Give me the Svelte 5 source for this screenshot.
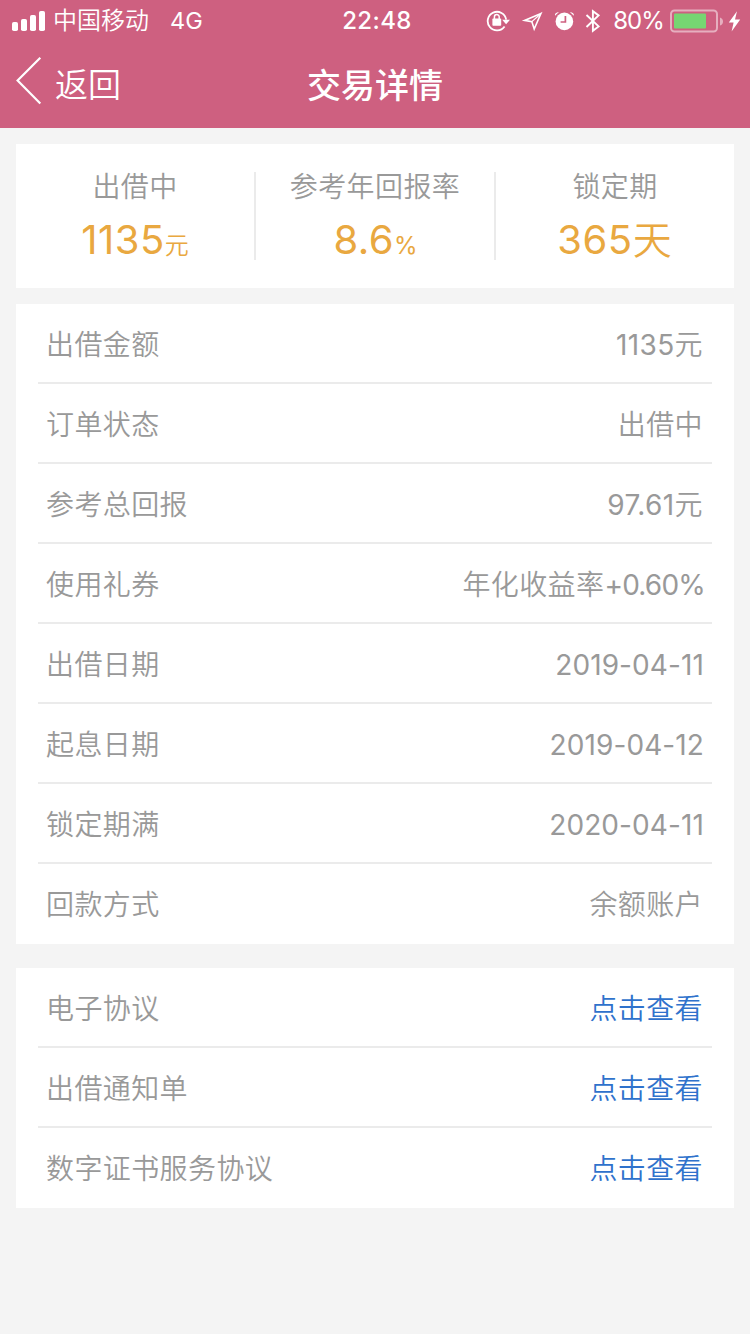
<script>
  const summary = [
    { label: '出借中', value: '1135', unit: '元', kind: 'small' },
    { label: '参考年回报率', value: '8.6', unit: '%', kind: 'small percentage' },
    { label: '锁定期', value: '365', unit: '天', kind: 'days' }
  ];
  const details = [
    { label: '出借金额', num: '1135', suffix: '元' },
    { label: '订单状态', suffix: '出借中' },
    { label: '参考总回报', num: '97.61', suffix: '元' },
    { label: '使用礼券', prefix: '年化收益率', num: '+0.60%' },
    { label: '出借日期', num: '2019-04-11' },
    { label: '起息日期', num: '2019-04-12' },
    { label: '锁定期满', num: '2020-04-11' },
    { label: '回款方式', suffix: '余额账户' }
  ];
  const documents = ['电子协议', '出借通知单', '数字证书服务协议'];
</script>

<div class="screen">
  <header>
    <div class="status">
      <div class="left">
        <svg width="34" height="20" viewBox="0 0 34 20" fill="#fff">
          <rect x="0" y="11" width="6" height="9" rx="1.8" />
          <rect x="9" y="8" width="6" height="12" rx="1.8" />
          <rect x="18" y="4" width="6" height="16" rx="1.8" />
          <rect x="27" y="0" width="6" height="20" rx="1.8" />
        </svg>
        <span class="carrier">中国移动</span>
        <span class="network">4G</span>
      </div>
      <div class="clock">22:48</div>
      <div class="right">
        <svg width="132" height="40" viewBox="0 0 132 40" fill="none" stroke="#fff">
          <path d="M18.6 25.5A9.3 9.3 0 1 1 20.2 18.7" stroke-width="1.8" />
          <path d="M16.2 18.8h7.8l-3.9 4.5z" fill="#fff" stroke="none" />
          <rect x="6.4" y="17.6" width="8.8" height="7.2" rx=".8" fill="#fff" stroke="none" />
          <path d="M8.4 18v-2a2.4 2.4 0 0 1 4.8 0v2" stroke-width="1.5" />
          <path d="M55 12.4 38.6 19.4 45.8 20.6 48.2 28z" stroke-width="1.6" stroke-miterlimit="8" />
          <path d="M54.6 13 45.8 20.6" stroke-width="1.2" />
          <circle cx="78.4" cy="20.4" r="8.8" fill="#fff" stroke="none" />
          <path d="M79.4 15v6h-4.8" stroke="#ce6080" stroke-width="1.7" />
          <path d="M69 14.8q-.6-3.4 4-3.8zM87.8 14.8q.6-3.4-4-3.8z" fill="#fff" stroke="none" />
          <path d="M100.5 14 112.6 25.4 106.9 29.8V10.2L112.6 14.4 100.5 26" stroke-width="1.9" />
        </svg>
        <span class="percent">80%</span>
        <svg width="72" height="24" viewBox="0 0 72 24">
          <rect x="1" y="1.5" width="46" height="21" rx="3.5" fill="none" stroke="#e6afbf" stroke-width="2" />
          <rect x="4" y="4.5" width="32" height="15" rx="1" fill="#76d672" />
          <path d="M50 8.5q3 1 3 4t-3 4z" fill="#e6afbf" />
          <path d="M67 2.2 58.8 13.6h4.8L61.6 22.4 70.2 10.6h-5.2z" fill="#fff" />
        </svg>
      </div>
    </div>
    <nav>
      <button class="back">
        <svg width="28" height="50" viewBox="0 0 28 50" fill="none" stroke="#fff" stroke-width="2.2">
          <path d="M25.3 1.7 2.6 24.5 25.3 47.5" />
        </svg>
        <span>返回</span>
      </button>
      <h1>交易详情</h1>
    </nav>
  </header>

  <section class="summary">
    {#each summary as item}
      <div class="metric">
        <div class="caption">{item.label}</div>
        <div class="amount"><span>{item.value}</span><span class="unit {item.kind}">{item.unit}</span></div>
      </div>
    {/each}
  </section>

  <section class="list">
    {#each details as row}
      <div class="row">
        <span class="label">{row.label}</span>
        <span class="value" class:tight={row.prefix} class:date={!row.prefix && !row.suffix}>{row.prefix ?? ''}<span class="num">{row.num ?? ''}</span>{row.suffix ?? ''}</span>
      </div>
    {/each}
  </section>

  <section class="list documents">
    {#each documents as name}
      <div class="row">
        <span class="label">{name}</span>
        <a class="value" href="#view">点击查看</a>
      </div>
    {/each}
  </section>
</div>

<style>
  :global(body) { margin: 0; background: #f4f4f4; }
  .screen {
    width: 750px;
    min-height: 1334px;
    background: #f4f4f4;
    font-family: Inter, "Noto Sans CJK SC", sans-serif;
    font-weight: 350;
    color: #999;
  }
  svg { display: block; flex: none; }
  header { height: 128px; background: #ce6080; color: #fff; }
  .status {
    height: 40px;
    display: grid;
    grid-template-columns: 1fr auto 1fr;
    align-items: center;
    font-size: 24px;
    line-height: 40px;
  }
  .status span, .clock { padding-top: 1px; }
  .left { display: flex; align-items: center; padding-left: 12px; }
  .carrier { margin-left: 7px; }
  .network { margin-left: 21px; font-size: 23.5px; font-weight: 400; }
  .clock { font-weight: 550; letter-spacing: .4px; margin-left: 4px; }
  .right { display: flex; align-items: center; justify-content: flex-end; padding-right: 8px; }
  .percent { font-weight: 400; letter-spacing: -.9px; margin: 0 6px 0 -4.5px; }
  nav {
    height: 88px;
    display: grid;
    grid-template-columns: 1fr auto 1fr;
    align-items: center;
  }
  .back {
    display: flex;
    align-items: center;
    gap: 12px;
    padding: 0 0 6px 15px;
    border: 0;
    background: none;
    color: inherit;
    font: inherit;
    font-size: 33px;
    line-height: 48px;
  }
  .back span { padding-top: 7px; }
  h1 { margin: 0; padding-top: 3px; font-size: 34px; line-height: 85px; font-weight: 500; }
  .summary {
    margin: 16px 16px 0;
    height: 144px;
    background: #fff;
    display: grid;
    grid-template-columns: 240px 240px 1fr;
    align-items: center;
    text-align: center;
  }
  .metric { height: 88px; }
  .metric:not(:last-child) { border-right: 2px solid #ebebeb; }
  .caption { padding-top: 1px; font-size: 28px; line-height: 28px; letter-spacing: .4px; }
  .amount { margin-top: 15px; font-size: 40px; line-height: 48px; color: #e9a840; }
  .amount span:first-child { font-weight: 400; letter-spacing: .5px; }
  .small { font-size: 24px; }
  .days { font-size: 39px; margin-right: 1px; }
  .percentage { font-weight: 400; letter-spacing: -1px; }
  .list { margin: 16px 16px 0; padding: 0 22px; background: #fff; }
  .documents { margin-top: 24px; }
  .row {
    height: 80px;
    box-sizing: border-box;
    display: flex;
    justify-content: space-between;
    padding: 2px 9px 0 8px;
    border-bottom: 2px solid #ebebeb;
    font-size: 28px;
    line-height: 78px;
    letter-spacing: .4px;
  }
  .row:last-child { border-bottom: 0; }
  .num { font-weight: 400; }
  .date { margin-right: -1px; }
  .date .num { letter-spacing: .1px; }
  .tight { margin-right: -2px; }
  .tight .num { letter-spacing: -.8px; }
  a { color: #2f72cc; text-decoration: none; }
</style>
